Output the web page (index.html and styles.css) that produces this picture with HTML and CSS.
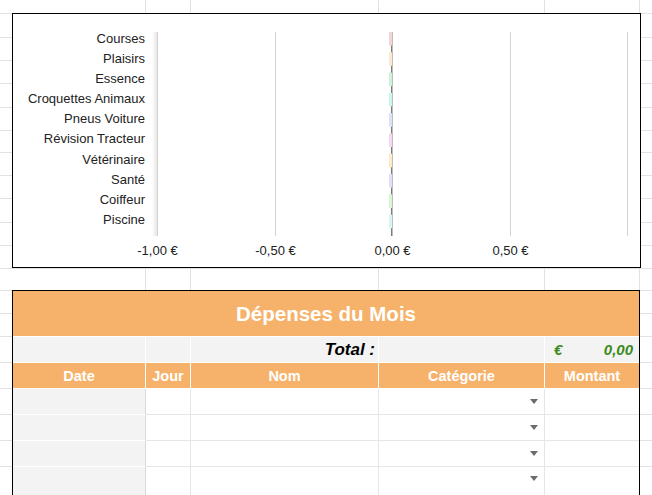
FILE: index.html
```html
<!DOCTYPE html>
<html lang="fr">
<head>
<meta charset="utf-8">
<title>Dépenses du Mois</title>
<link rel="stylesheet" href="styles.css">
</head>
<body>
<div class="chart">
  <div class="cat-labels">
    <div>Courses</div>
    <div>Plaisirs</div>
    <div>Essence</div>
    <div>Croquettes Animaux</div>
    <div>Pneus Voiture</div>
    <div>Révision Tracteur</div>
    <div>Vétérinaire</div>
    <div>Santé</div>
    <div>Coiffeur</div>
    <div>Piscine</div>
  </div>
  <svg class="plot" width="494" height="253" viewBox="0 0 494 253">
    <defs>
      <linearGradient id="shade" x1="0" x2="1" y1="0" y2="0">
        <stop offset="0" stop-color="#ffffff"/>
        <stop offset="1" stop-color="#e6e6e6"/>
      </linearGradient>
    </defs>
    <rect x="7" y="18" width="5" height="204" fill="url(#shade)"/>
    <g stroke="#d3d3d3" stroke-width="1">
      <line x1="12.5" y1="18" x2="12.5" y2="222"/>
      <line x1="130.5" y1="18" x2="130.5" y2="222"/>
      <line x1="247.5" y1="18" x2="247.5" y2="222"/>
      <line x1="365.5" y1="18" x2="365.5" y2="222"/>
      <line x1="482.5" y1="18" x2="482.5" y2="222"/>
    </g>
    <line x1="246.6" y1="18" x2="246.6" y2="222" stroke="#7c7c7c" stroke-width="1.3"/>
    <g>
      <rect x="244" y="18" width="3" height="13.5" fill="#f8d3d3"/>
      <rect x="244" y="38.3" width="3" height="13.5" fill="#fde8cd"/>
      <rect x="244" y="58.6" width="3" height="13.5" fill="#cbf4d6"/>
      <rect x="244" y="78.9" width="3" height="13.5" fill="#c8f5ec"/>
      <rect x="244" y="99.2" width="3" height="13.5" fill="#d9e3f9"/>
      <rect x="244" y="119.5" width="3" height="13.5" fill="#f8d6f1"/>
      <rect x="244" y="139.8" width="3" height="13.5" fill="#fcebc3"/>
      <rect x="244" y="160.1" width="3" height="13.5" fill="#e3dcfa"/>
      <rect x="244" y="180.4" width="3" height="13.5" fill="#daf5d1"/>
      <rect x="244" y="200.7" width="3" height="13.5" fill="#d5f6f3"/>
    </g>
    <g class="axis-text" text-anchor="middle">
      <text x="12.5" y="240.5">-1,00 €</text>
      <text x="130.5" y="240.5">-0,50 €</text>
      <text x="247.5" y="240.5">0,00 €</text>
      <text x="365.5" y="240.5">0,50 €</text>
    </g>
  </svg>
</div>

<div class="expenses">
  <div class="title">Dépenses du Mois</div>

  <div class="cell total"></div>
  <div class="cell total"></div>
  <div class="cell total total-label">Total :</div>
  <div class="cell total"></div>
  <div class="cell total total-amount"><span>€</span><span>0,00</span></div>

  <div class="cell head">Date</div>
  <div class="cell head">Jour</div>
  <div class="cell head">Nom</div>
  <div class="cell head">Catégorie</div>
  <div class="cell head">Montant</div>

  <div class="cell data date"></div>
  <div class="cell data"></div>
  <div class="cell data"></div>
  <div class="cell data select"><span class="arrow"></span></div>
  <div class="cell data"></div>

  <div class="cell data date"></div>
  <div class="cell data"></div>
  <div class="cell data"></div>
  <div class="cell data select"><span class="arrow"></span></div>
  <div class="cell data"></div>

  <div class="cell data date"></div>
  <div class="cell data"></div>
  <div class="cell data"></div>
  <div class="cell data select"><span class="arrow"></span></div>
  <div class="cell data"></div>

  <div class="cell data date"></div>
  <div class="cell data"></div>
  <div class="cell data"></div>
  <div class="cell data select"><span class="arrow"></span></div>
  <div class="cell data"></div>
</div>
</body>
</html>
```

FILE: styles.css
```css
html, body {
  margin: 0;
}

body {
  --gl: linear-gradient(#e2e2e2, #e2e2e2);
  width: 652px;
  height: 495px;
  overflow: hidden;
  box-sizing: border-box;
  padding: 13px 0 0 12px;
  font-family: "Liberation Sans", Arial, sans-serif;
  color: #222;
  background-color: #fff;
  background-repeat: no-repeat;
  background-image:
    var(--gl), var(--gl), var(--gl), var(--gl), var(--gl),
    var(--gl), var(--gl), var(--gl), var(--gl), var(--gl),
    var(--gl), var(--gl), var(--gl), var(--gl), var(--gl),
    var(--gl), var(--gl), var(--gl), var(--gl), var(--gl),
    var(--gl), var(--gl), var(--gl), var(--gl), var(--gl);
  background-size:
    1px 100%, 1px 100%, 1px 100%, 1px 100%, 1px 100%,
    100% 1px, 100% 1px, 100% 1px, 100% 1px, 100% 1px,
    100% 1px, 100% 1px, 100% 1px, 100% 1px, 100% 1px,
    100% 1px, 100% 1px, 100% 1px, 100% 1px, 100% 1px,
    100% 1px, 100% 1px, 100% 1px, 100% 1px, 100% 1px;
  background-position:
    145px 0, 190px 0, 378px 0, 544px 0, 639px 0,
    0 13px, 0 37px, 0 60px, 0 83px, 0 107px,
    0 130px, 0 152px, 0 175px, 0 198px, 0 222px,
    0 245px, 0 268px, 0 290px, 0 313px, 0 336px,
    0 362px, 0 388px, 0 414px, 0 440px, 0 466px;
}

/* ---------- chart ---------- */
.chart {
  box-sizing: border-box;
  width: 629px;
  height: 255px;
  border: 1px solid #000;
  background: #fff;
  display: grid;
  grid-template-columns: 132px 494px;
  align-items: start;
}

.cat-labels {
  padding-top: 15px;
  text-align: right;
  font-size: 13px;
}

.cat-labels div {
  height: 20.1px;
  line-height: 20.1px;
  white-space: nowrap;
}

.plot {
  display: block;
  overflow: visible;
}

.axis-text {
  font-family: "Liberation Sans", Arial, sans-serif;
  font-size: 13px;
  fill: #222;
}

/* ---------- expenses table ---------- */
.expenses {
  box-sizing: border-box;
  width: 628px;
  margin-top: 22px;
  border: 1px solid #000;
  border-bottom: none;
  display: grid;
  grid-template-columns: 133px 45px 188px 166px 94px;
  grid-template-rows: 46px 26px 26px 26px 26px 26px 40px;
}

.title {
  grid-column: 1 / -1;
  box-sizing: border-box;
  border-bottom: 1px solid #fff;
  background: #f6b26b;
  color: #fff;
  font-weight: bold;
  font-size: 20.5px;
  display: flex;
  align-items: center;
  justify-content: center;
  padding-top: 1px;
}

.cell {
  box-sizing: border-box;
  border-right: 1px solid #fff;
  border-bottom: 1px solid #fff;
  display: flex;
  align-items: center;
  min-width: 0;
}

.cell:nth-child(5n+1) {
  border-right: none;
}

.total {
  background: #f3f3f3;
}

.total-label {
  justify-content: flex-end;
  padding-right: 3px;
  font-weight: bold;
  font-style: italic;
  font-size: 17px;
  color: #000;
}

.total-amount {
  justify-content: space-between;
  padding: 0 6px 0 9px;
  font-weight: bold;
  font-style: italic;
  font-size: 15px;
  color: #3b8a1c;
}

.head {
  background: #f6b26b;
  color: #fff;
  font-weight: bold;
  font-size: 14.5px;
  justify-content: center;
}

.data {
  background: #fff;
  border-right-color: #e6e6e6;
  border-bottom-color: #e6e6e6;
}

.data.date {
  background: #f3f3f3;
  border-right-color: #d9d9d9;
  border-bottom-color: #fff;
}

.select {
  justify-content: flex-end;
  padding-right: 6px;
}

.select:nth-last-child(2) {
  align-items: flex-start;
  padding-top: 10px;
}

.arrow {
  width: 0;
  height: 0;
  border-left: 4.5px solid transparent;
  border-right: 4.5px solid transparent;
  border-top: 5px solid #6c6c6c;
  margin-top: -1px;
}
```
